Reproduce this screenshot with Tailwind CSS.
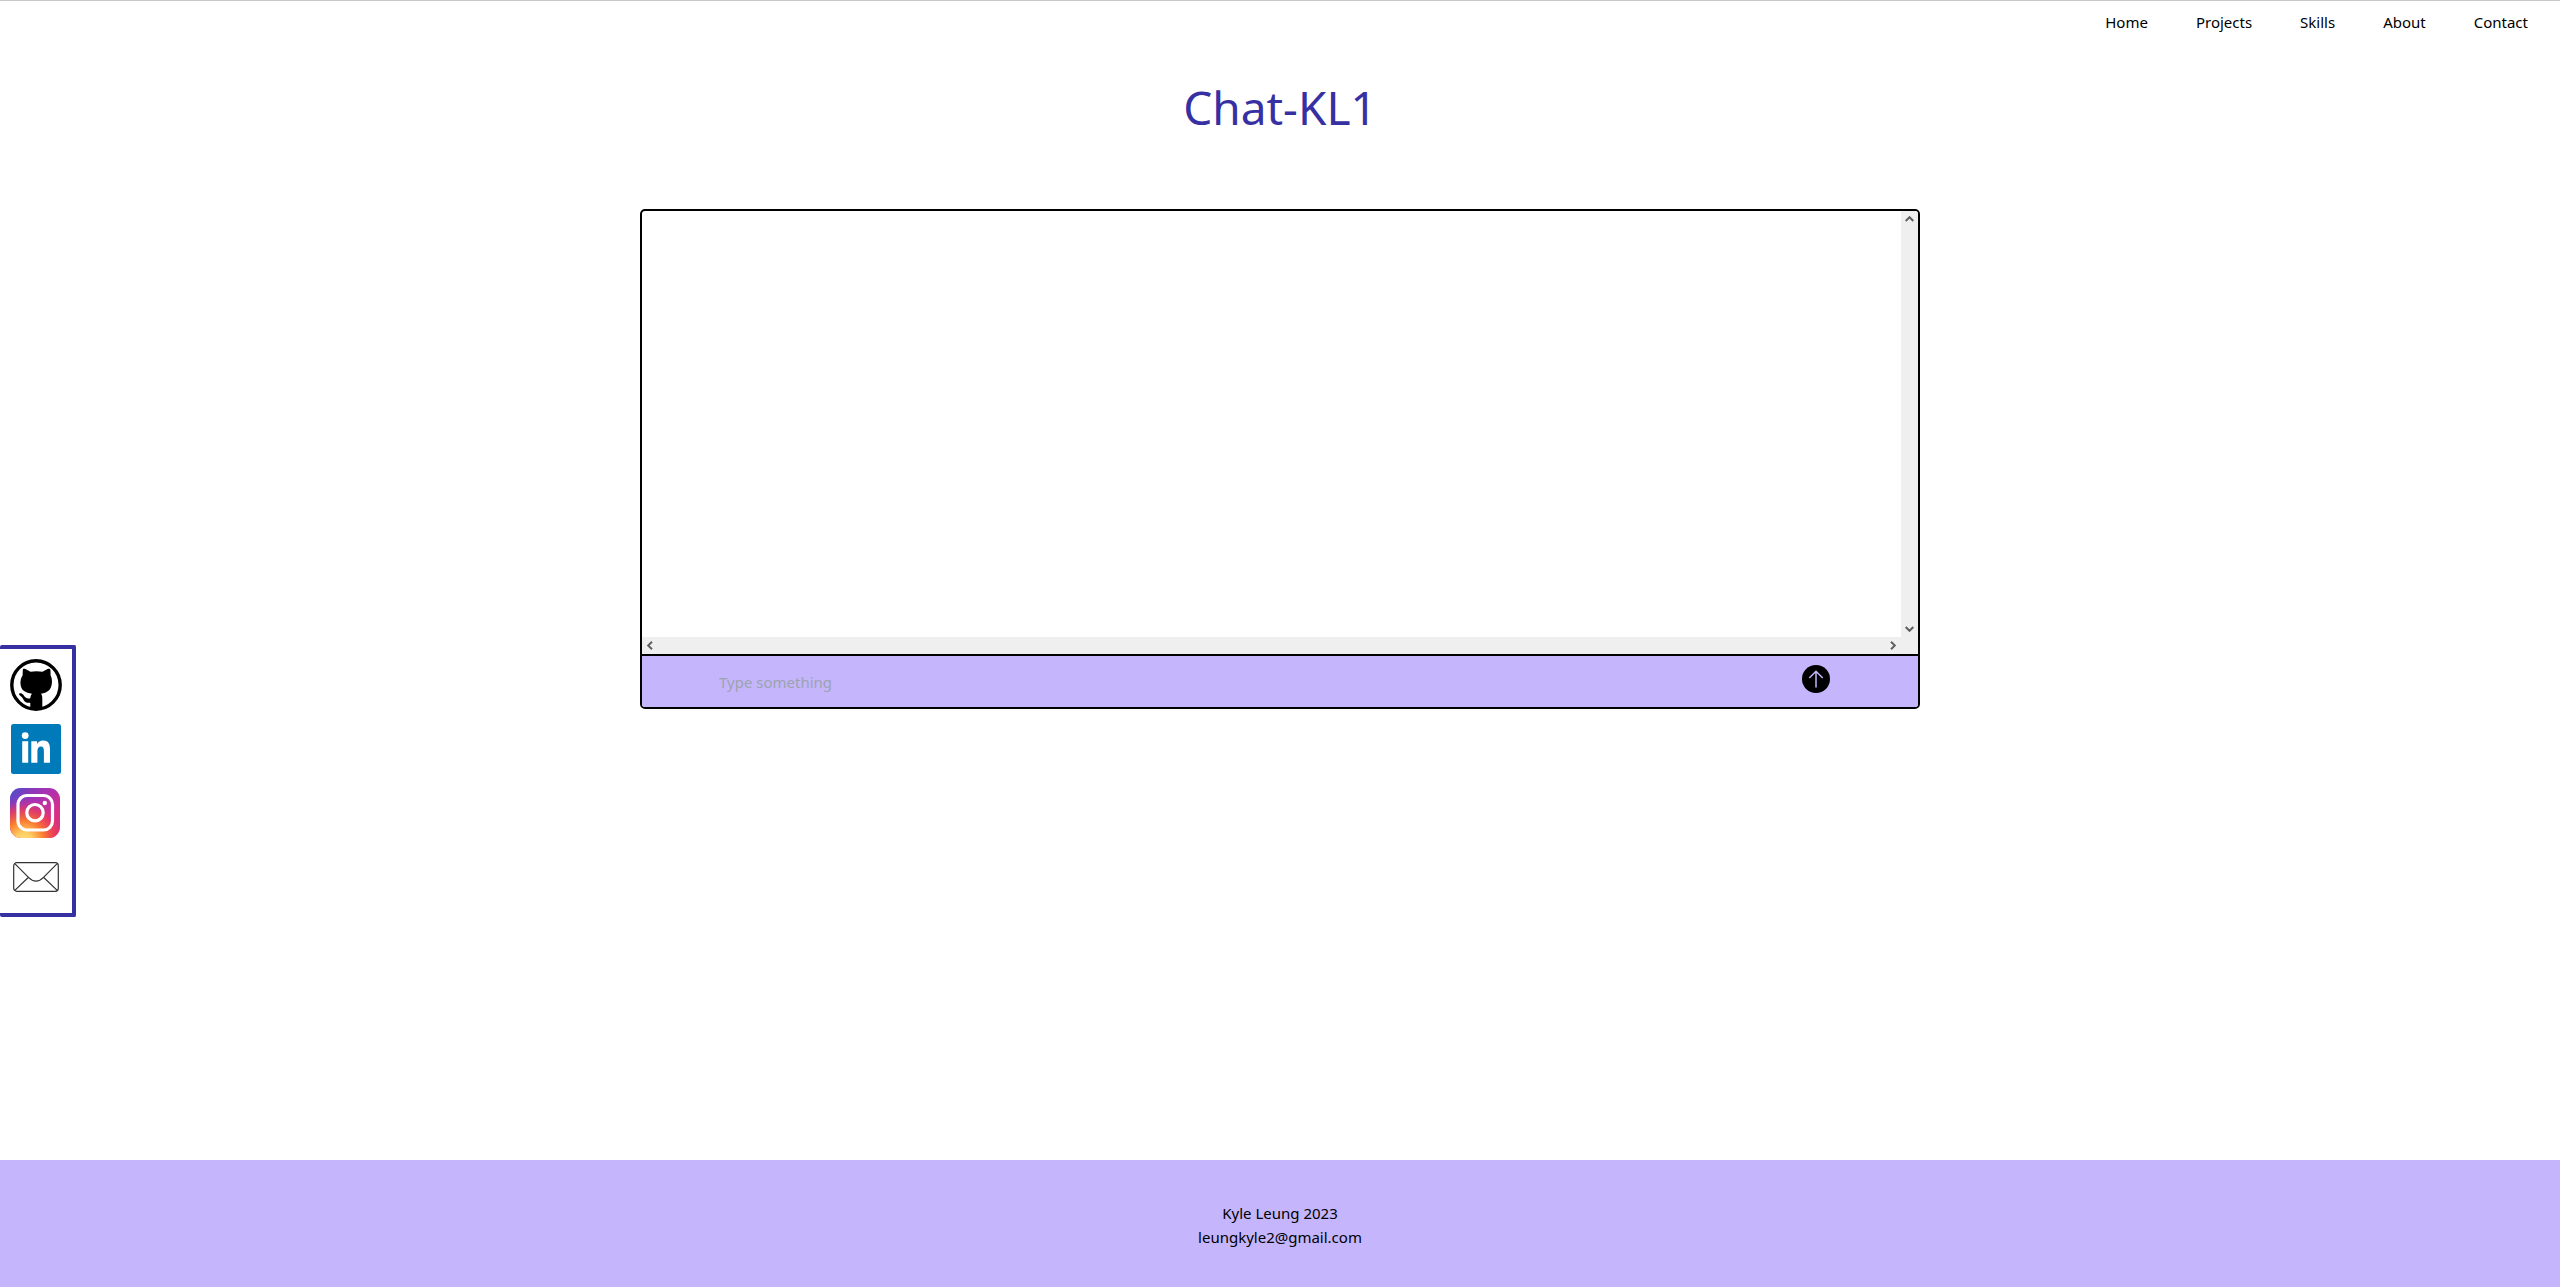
<!DOCTYPE html>
<html lang="en">
<head>
<meta charset="utf-8">
<meta name="viewport" content="width=device-width, initial-scale=1">
<title>Chat-KL1</title>
<script src="https://cdn.jsdelivr.net/npm/@tailwindcss/browser@4"></script>
</head>
<body class="flex min-h-screen flex-col border-t border-[#c8c8c8] bg-white font-['Segoe_UI','Noto_Sans',sans-serif] text-[15px] leading-6 text-black">
<header>
  <nav class="flex justify-end gap-12 px-8 pt-[9px]">
    <a href="#home">Home</a>
    <a href="#projects">Projects</a>
    <a href="#skills">Skills</a>
    <a href="#about">About</a>
    <a href="#contact">Contact</a>
  </nav>
</header>

<aside class="fixed top-[645px] left-0 flex flex-col rounded-xs border-4 border-l-0 border-[#3730a3] bg-white p-1" aria-label="Social links">
  <a href="#github" aria-label="GitHub" class="flex size-16 items-center justify-center">
    <svg class="size-[52px]" viewBox="0 0 52 52">
      <circle cx="26" cy="26" r="24.200" fill="#fff" stroke="#000" stroke-width="3.400"/>
      <path d="M12.800 11C12.700 9.600 14 9.500 15.500 10L20.500 12.800C24 12 29 12 32.500 12.800L37.500 10C39.500 9.300 40.500 10 40.500 11.500L40.600 16.500C43 21 42.300 28.500 38.500 31.800C36.500 33.500 34 34.300 31 34.800C32 36 32.300 37.500 32.300 39.500V50H20.300V43.700C15.500 44.500 14 42 12.800 39.500C12 37.800 9.500 36.500 9 35.200C9 33.600 12 33.800 13.500 36C15.200 38.700 17 40.300 20.300 39.300C20.400 37.500 20.900 36 22 34.800C19 34.300 15.700 33.500 13.700 31.800C9.800 28.500 9.400 21 12.600 16.500Z"/>
    </svg>
  </a>
  <a href="#linkedin" aria-label="LinkedIn" class="flex size-16 items-center justify-center">
    <svg class="size-[50px]" viewBox="0 0 50 50">
      <rect width="50" height="50" rx="2.500" fill="#007ab9"/>
      <g fill="#fff"><circle cx="14.200" cy="11.600" r="3.400"/><path d="M11.200 17.200h6V38.800h-6zM20.300 17.200h5.800v2.700c1.200-2 3.200-3.300 6-3.300 5 0 6.900 3.200 6.900 8.700V38.800h-6.100V27c0-2.800-.7-4.600-2.900-4.600-2.400 0-3.600 1.700-3.600 4.600V38.800h-6.100z"/></g>
    </svg>
  </a>
  <a href="#instagram" aria-label="Instagram" class="flex size-16 items-center justify-center">
    <svg class="size-[52px]" viewBox="0 -1 52 52">
      <defs>
        <linearGradient id="ig-base" x1=".1" y1="0" x2=".9" y2="1"><stop offset="0" stop-color="#6542c5"/><stop offset=".35" stop-color="#a832b3"/><stop offset=".7" stop-color="#d82f88"/><stop offset="1" stop-color="#e02d70"/></linearGradient>
        <radialGradient id="ig-warm" cx=".28" cy="1.060" r=".85"><stop offset="0" stop-color="#ffdd80"/><stop offset=".2" stop-color="#ffce62"/><stop offset=".48" stop-color="#fa7a30"/><stop offset=".75" stop-color="#ee3f50" stop-opacity=".7"/><stop offset="1" stop-color="#cc309a" stop-opacity="0"/></radialGradient>
        <radialGradient id="ig-blue" cx="0" cy="0" r=".4"><stop offset="0" stop-color="#3f56cf"/><stop offset="1" stop-color="#7840c0" stop-opacity="0"/></radialGradient>
      </defs>
      <rect width="50" height="50" rx="11" fill="url(#ig-base)"/>
      <rect width="50" height="50" rx="11" fill="url(#ig-warm)"/>
      <rect width="50" height="50" rx="11" fill="url(#ig-blue)"/>
      <rect x="8" y="7.500" width="34.500" height="34.500" rx="9" fill="none" stroke="#fff" stroke-width="3.200"/>
      <circle cx="25" cy="24.700" r="8.200" fill="none" stroke="#fff" stroke-width="3.200"/>
      <circle cx="34.800" cy="15" r="2.200" fill="#fff"/>
    </svg>
  </a>
  <a href="#email" aria-label="Email" class="flex size-16 items-center justify-center">
    <svg class="h-[30px] w-[46px]" viewBox="0 0 46 30" fill="none" stroke="#333" stroke-width="1.200">
      <rect x=".7" y=".7" width="44.600" height="28.600" rx="3"/>
      <path d="M1.800 1.600 15.500 15.300Q23 23 30.500 15.300L44.200 1.600M1.800 28.400 15.500 15.300M44.200 28.400 30.500 15.300"/>
    </svg>
  </a>
</aside>

<main class="flex grow flex-col items-center">
  <h1 class="mt-[47px] text-[46px] leading-[52px] text-[#3730a3]">Chat-KL1</h1>
  <section class="mt-[76px] w-1/2 overflow-hidden rounded-[5px] border-2 border-black" aria-label="Chat">
    <div class="grid h-[443px] grid-cols-[1fr_17px] grid-rows-[1fr_17px]">
      <div></div>
      <div class="flex flex-col items-center justify-between bg-[#efefef] py-1">
        <svg class="h-2 w-[9px]" viewBox="0 0 9 8" fill="none" stroke="#606060" stroke-width="2"><path d="M.7 6 4.500 2.200 8.300 6"/></svg>
        <svg class="h-2 w-[9px]" viewBox="0 0 9 8" fill="none" stroke="#606060" stroke-width="2"><path d="M.7 2 4.500 5.800 8.300 2"/></svg>
      </div>
      <div class="flex items-center justify-between bg-[#efefef] px-1">
        <svg class="h-[9px] w-2" viewBox="0 0 8 9" fill="none" stroke="#606060" stroke-width="2"><path d="M6 .7 2.200 4.500 6 8.300"/></svg>
        <svg class="h-[9px] w-2" viewBox="0 0 8 9" fill="none" stroke="#606060" stroke-width="2"><path d="M2 .7 5.800 4.500 2 8.300"/></svg>
      </div>
      <div class="bg-[#efefef]"></div>
    </div>
    <form class="flex items-start border-t-2 border-black bg-[#c4b5fd] pr-[88px] pl-[77px]">
      <input type="text" aria-label="Message" placeholder="Type something" class="mt-[14px] mb-[13px] h-6 min-w-0 grow bg-transparent outline-none placeholder:text-[#9ca3af]">
      <button type="button" aria-label="Send" class="mt-[9px]">
        <svg class="size-7" viewBox="0 0 28 28"><circle cx="14" cy="14" r="14"/><path d="M14 22.500V6.500M7.300 13 14 6.300 20.700 13" fill="none" stroke="#c4b5fd" stroke-width="1.500"/></svg>
      </button>
    </form>
  </section>
</main>

<footer class="flex flex-col items-center bg-[#c4b5fd] pt-[41px] pb-[38px]">
  <p>Kyle Leung 2023</p>
  <a href="mailto:leungkyle2@gmail.com">leungkyle2@gmail.com</a>
</footer>
</body>
</html>
